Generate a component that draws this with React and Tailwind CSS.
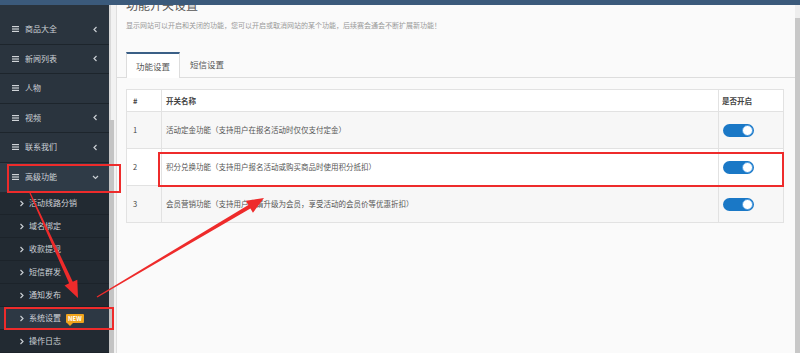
import React from "react";

const menu = [
  { name: "商品大全", arrow: true },
  { name: "新闻列表", arrow: true },
  { name: "人物", arrow: false },
  { name: "视频", arrow: true },
  { name: "联系我们", arrow: true },
];

const subMenu = ["活动线路分销", "域名绑定", "收款提现", "短信群发", "通知发布", "系统设置", "操作日志"];

const rows = [
  { id: 1, name: "活动定金功能（支持用户在报名活动时仅仅支付定金）" },
  { id: 2, name: "积分兑换功能（支持用户报名活动或购买商品时使用积分抵扣）" },
  { id: 3, name: "会员营销功能（支持用户申请升级为会员，享受活动的会员价等优惠折扣）" },
];

const Bars = () => (
  <svg width="7" height="6" viewBox="0 0 7 6" className="shrink-0">
    <rect x="0" y="0" width="7" height="1.2" fill="#d0d4d8" />
    <rect x="0" y="2.4" width="7" height="1.2" fill="#d0d4d8" />
    <rect x="0" y="4.8" width="7" height="1.2" fill="#d0d4d8" />
  </svg>
);

const Chevron = ({ dir }) => {
  const d = dir === "left" ? "M3.5 1 L1 3.5 L3.5 6" : dir === "down" ? "M1 2 L3.5 4.5 L6 2" : "M1.5 1 L4 3.5 L1.5 6";
  return (
    <svg width="7" height="7" viewBox="0 0 7 7" className="shrink-0">
      <path d={d} fill="none" stroke="#c9ced3" strokeWidth="1.2" />
    </svg>
  );
};

const Toggle = () => (
  <div className="w-[31px] h-[13px] rounded-full bg-[#1a78c6] flex items-center justify-end pr-[1px]">
    <div className="w-[11px] h-[11px] rounded-full bg-white border border-[#4a9ae0]" />
  </div>
);

function arrow(x1, y1, x2, y2) {
  const L = Math.hypot(x2 - x1, y2 - y1);
  const dx = (x2 - x1) / L;
  const dy = (y2 - y1) / L;
  const nx = -dy;
  const ny = dx;
  const nkx = x2 - dx * 17;
  const nky = y2 - dy * 17;
  const p = (x, y, k) => `${x + nx * k},${y + ny * k}`;
  return [p(x1, y1, 0.6), p(nkx, nky, 2), p(nkx, nky, 7), `${x2},${y2}`, p(nkx, nky, -7), p(nkx, nky, -2), p(x1, y1, -0.6)].join(" ");
}

export default function App() {
  return (
    <div className="relative w-[800px] h-[353px] overflow-hidden flex flex-col bg-[#fafafa] font-['Noto_Sans_CJK_SC',sans-serif]">
      <div className="h-[5px] shrink-0 bg-[#3b5a7b]" />
      <div className="flex flex-1 min-h-0">
        {/* sidebar */}
        <aside className="w-[109px] shrink-0 bg-[#2a343e] pt-[10px] text-[8px] text-[#cdd2d7]">
          {menu.map((m) => (
            <div key={m.name} className="h-[29.5px] border-b border-[#1d252c] flex items-center pl-[12px] pr-[9px]">
              <Bars />
              <span className="ml-[6px] flex-1">{m.name}</span>
              {m.arrow && <Chevron dir="left" />}
            </div>
          ))}
          <div className="h-[29.5px] bg-[#2f3b47] flex items-center pl-[12px] pr-[10px]">
            <Bars />
            <span className="ml-[6px] flex-1">高级功能</span>
            <Chevron dir="down" />
          </div>
          <div className="bg-[#222a32]">
            {subMenu.map((s) => (
              <div
                key={s}
                className={`h-[23px] flex items-center pl-[19px] border-b border-[#1c232a] ${s === "系统设置" ? "bg-[#2d3844]" : ""}`}
              >
                <Chevron dir="right" />
                <span className="ml-[3px]">{s}</span>
                {s === "系统设置" && (
                  <span className="relative ml-[5px] bg-[#f0a31c] text-white text-[6px] leading-[9px] font-bold px-[2px] rounded-[1px]">
                    NEW
                    <span className="absolute left-[1px] bottom-[-3px] w-0 h-0 border-l-[3px] border-l-transparent border-r-[3px] border-r-transparent border-t-[3px] border-t-[#f0a31c]" />
                  </span>
                )}
              </div>
            ))}
          </div>
        </aside>

        {/* sidebar scroll strip */}
        <div className="w-[8px] shrink-0 bg-[#f2f2f2] border-r border-[#dedede] flex flex-col">
          <div className="h-[115px] border-l-[2px] border-[#d9d9d9]" />
          <div className="flex-1 w-[5px] bg-[#c4c4c4]" />
        </div>

        {/* main */}
        <main className="flex-1 min-w-0 overflow-hidden pl-[9px] pr-[11px] bg-[#fafafa]">
          <h1 className="-mt-[6px] text-[12px] leading-[12px] text-[#555]">功能开关设置</h1>
          <p className="mt-[10px] text-[7px] leading-[8px] text-[#999]">
            显示网站可以开启和关闭的功能，您可以开启或取消网站的某个功能，后续赛会通会不断扩展新功能！
          </p>

          <div className="mt-[23px] -ml-[9px] -mr-[11px] pl-[9px] flex border-b border-[#dddddd] h-[26px]">
            <div className="w-[54px] -mb-px bg-white border-t-2 border-t-[#3a5f86] border-x border-x-[#dddddd] flex items-center justify-center text-[8.5px] text-[#555]">
              功能设置
            </div>
            <div className="w-[54px] flex items-center justify-center text-[8.5px] text-[#555]">短信设置</div>
          </div>

          <table className="mt-[11px] w-[658px] border-collapse border border-[#d9d9d9] text-[7.5px] text-[#444]">
            <thead>
              <tr className="h-[22px] bg-white">
                <th className="w-[35px] border border-[#e2e2e2] text-left pl-[6px] font-bold">#</th>
                <th className="border border-[#e2e2e2] text-left pl-[4px] font-bold">开关名称</th>
                <th className="w-[65px] border border-[#e2e2e2] text-left pl-[3px] font-bold">是否开启</th>
              </tr>
            </thead>
            <tbody>
              {rows.map((r) => (
                <tr key={r.id} className={`h-[37px] ${r.id % 2 ? "bg-[#f7f7f7]" : "bg-white"}`}>
                  <td className="border border-[#e2e2e2] pl-[6px]">{r.id}</td>
                  <td className="border border-[#e2e2e2] pl-[4px] text-[#555]">{r.name}</td>
                  <td className="border border-[#e2e2e2] pl-[4px]">
                    <Toggle />
                  </td>
                </tr>
              ))}
            </tbody>
          </table>
        </main>

        {/* right scrollbar */}
        <div className="w-[5px] shrink-0 bg-[#eeeeee] flex flex-col">
          <div className="h-[13px]" />
          <div className="flex-1 bg-[#c8c8c8]" />
        </div>
      </div>

      {/* red annotations */}
      <svg className="absolute inset-0 pointer-events-none" width="800" height="353">
        <rect x="8" y="165" width="112" height="27" fill="none" stroke="#ee2b2b" strokeWidth="2" />
        <rect x="5" y="308" width="108" height="21" fill="none" stroke="#ee2b2b" strokeWidth="2" />
        <rect x="159" y="153" width="624" height="33" fill="none" stroke="#ee2b2b" strokeWidth="2" />
        <polygon points={arrow(30, 193, 78, 298)} fill="#ee2b2b" />
        <polygon points={arrow(97, 297, 264, 198)} fill="#ee2b2b" />
      </svg>
    </div>
  );
}
